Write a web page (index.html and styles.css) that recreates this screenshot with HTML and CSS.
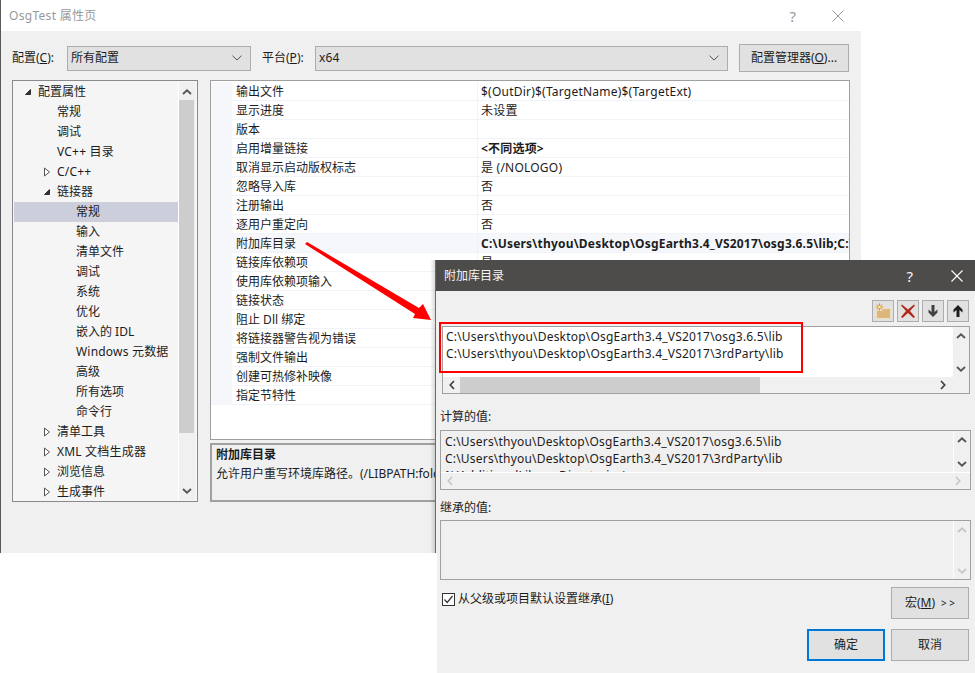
FILE: index.html
```html
<!DOCTYPE html>
<html lang="zh-CN">
<head>
<meta charset="utf-8">
<title>OsgTest 属性页</title>
<link rel="stylesheet" href="styles.css">
</head>
<body>
<svg class="defs" width="0" height="0" aria-hidden="true">
  <symbol id="open" viewBox="0 0 8 8"><path d="M6.5 1.5V6.5H1.5Z" fill="#333" stroke="#333"/></symbol>
  <symbol id="closed" viewBox="0 0 8 10"><path d="M1.5 1V9L6.5 5Z" fill="#fff" stroke="#555"/></symbol>
  <symbol id="up" viewBox="0 0 10 6"><path d="M1 5L5 1.3L9 5" fill="none" stroke="currentColor" stroke-width="1.8"/></symbol>
  <symbol id="down" viewBox="0 0 10 6"><path d="M1 1L5 4.7L9 1" fill="none" stroke="currentColor" stroke-width="1.8"/></symbol>
  <symbol id="left" viewBox="0 0 6 10"><path d="M5 1L1.3 5L5 9" fill="none" stroke="currentColor" stroke-width="1.8"/></symbol>
  <symbol id="right" viewBox="0 0 6 10"><path d="M1 1L4.7 5L1 9" fill="none" stroke="currentColor" stroke-width="1.8"/></symbol>
  <symbol id="caret" viewBox="0 0 10 6"><path d="M.5 .7L5 5L9.5 .7" fill="none" stroke="#555" stroke-width="1"/></symbol>
</svg>

<div class="window main-window">
  <header class="main-title">
    <span class="main-title-text">OsgTest 属性页</span>
    <span class="title-help">?</span>
    <svg class="title-close" width="12" height="12" viewBox="0 0 12 12"><path d="M.5 .5L11.5 11.5M11.5 .5L.5 11.5" stroke="#999" fill="none"/></svg>
  </header>
  <div class="main-body">
    <div class="config-row">
      <span class="config-label label-a">配置(<u>C</u>):</span>
      <div class="select select-a"><span>所有配置</span><svg class="caret" width="10" height="6"><use href="#caret"/></svg></div>
      <span class="config-label label-b">平台(<u>P</u>):</span>
      <div class="select select-b"><span class="lat">x64</span><svg class="caret" width="10" height="6"><use href="#caret"/></svg></div>
      <div class="button config-button">配置管理器(<u>O</u>)...</div>
    </div>
    <div class="panels">
      <div class="tree">
        <ul class="tree-list">
          <li class="node l1"><svg class="tw" width="8" height="8"><use href="#open"/></svg>配置属性</li>
          <li class="node l2">常规</li>
          <li class="node l2">调试</li>
          <li class="node l2 lat">VC++ 目录</li>
          <li class="node l2 lat"><svg class="tw tw-c" width="8" height="10"><use href="#closed"/></svg>C/C++</li>
          <li class="node l2"><svg class="tw" width="8" height="8"><use href="#open"/></svg>链接器</li>
          <li class="node l3 selected">常规</li>
          <li class="node l3">输入</li>
          <li class="node l3">清单文件</li>
          <li class="node l3">调试</li>
          <li class="node l3">系统</li>
          <li class="node l3">优化</li>
          <li class="node l3">嵌入的 IDL</li>
          <li class="node l3 lat">Windows 元数据</li>
          <li class="node l3">高级</li>
          <li class="node l3">所有选项</li>
          <li class="node l3">命令行</li>
          <li class="node l2"><svg class="tw tw-c" width="8" height="10"><use href="#closed"/></svg>清单工具</li>
          <li class="node l2 lat"><svg class="tw tw-c" width="8" height="10"><use href="#closed"/></svg>XML 文档生成器</li>
          <li class="node l2"><svg class="tw tw-c" width="8" height="10"><use href="#closed"/></svg>浏览信息</li>
          <li class="node l2"><svg class="tw tw-c" width="8" height="10"><use href="#closed"/></svg>生成事件</li>
        </ul>
        <div class="vbar tree-bar">
          <svg class="bar-btn" width="10" height="6"><use href="#up"/></svg>
          <div class="tree-thumb"></div>
          <svg class="bar-btn" width="10" height="6"><use href="#down"/></svg>
        </div>
      </div>
      <div class="right-panels">
        <div class="grid">
          <div class="row"><span class="name">输出文件</span><span class="value">$(OutDir)$(TargetName)$(TargetExt)</span></div>
          <div class="row"><span class="name">显示进度</span><span class="value">未设置</span></div>
          <div class="row"><span class="name">版本</span><span class="value"></span></div>
          <div class="row"><span class="name">启用增量链接</span><span class="value strong">&lt;不同选项&gt;</span></div>
          <div class="row"><span class="name">取消显示启动版权标志</span><span class="value">是 (/NOLOGO)</span></div>
          <div class="row"><span class="name">忽略导入库</span><span class="value">否</span></div>
          <div class="row"><span class="name">注册输出</span><span class="value">否</span></div>
          <div class="row"><span class="name">逐用户重定向</span><span class="value">否</span></div>
          <div class="row current"><span class="name">附加库目录</span><span class="value strong">C:\Users\thyou\Desktop\OsgEarth3.4_VS2017\osg3.6.5\lib;C:\Users</span></div>
          <div class="row"><span class="name">链接库依赖项</span><span class="value">是</span></div>
          <div class="row"><span class="name">使用库依赖项输入</span><span class="value">否</span></div>
          <div class="row"><span class="name">链接状态</span><span class="value"></span></div>
          <div class="row"><span class="name">阻止 Dll 绑定</span><span class="value"></span></div>
          <div class="row"><span class="name">将链接器警告视为错误</span><span class="value"></span></div>
          <div class="row"><span class="name">强制文件输出</span><span class="value"></span></div>
          <div class="row"><span class="name">创建可热修补映像</span><span class="value"></span></div>
          <div class="row"><span class="name">指定节特性</span><span class="value"></span></div>
        </div>
        <div class="desc">
          <div class="desc-title">附加库目录</div>
          <div class="desc-text">允许用户重写环境库路径。(/LIBPATH:folder)</div>
        </div>
      </div>
    </div>
  </div>
  <div class="dialog-shade"></div>
</div>

<svg class="annotation" width="140" height="90" viewBox="0 0 140 90">
  <path d="M5 3L7 1L119 67L123 63L131 79L113 77L115 73Z" fill="#ff0000"/>
</svg>

<div class="window dialog">
  <header class="dialog-title">
    <span class="dialog-title-text">附加库目录</span>
    <span class="dialog-help">?</span>
    <svg class="dialog-close" width="12" height="12" viewBox="0 0 12 12"><path d="M.5 .5L11.5 11.5M11.5 .5L.5 11.5" stroke="#fff" stroke-width="1.1" fill="none"/></svg>
  </header>
  <div class="dialog-body">
    <div class="toolbar">
      <div class="tool"><svg width="20" height="18" viewBox="0 0 20 18">
        <path d="M3.5 8.5H9L10 6.5H17.5V16.5H3.5Z" fill="#dcb67a" stroke="#efe0c2"/>
        <path d="M6.5 1.5V8.5M3 5H10M4 2.5L9 7.5M9 2.5L4 7.5" stroke="#e08a10" stroke-width="1"/>
        <circle cx="6.5" cy="5" r="1.2" fill="#fff2b0"/>
      </svg></div>
      <div class="tool"><svg width="16" height="16" viewBox="0 0 16 16"><path d="M2 1.5L8 6.5L14 1.5L15 2.5L10 8L15 14L13.5 15L8 10L2.5 15L1 14L6 8L1 2.5Z" fill="#b3271a"/></svg></div>
      <div class="tool"><svg width="12" height="14" viewBox="0 0 12 14"><path d="M4.5 1H7.5V8L10.5 5.5V8.5L6 13L1.5 8.5V5.5L4.5 8Z" fill="#424242"/></svg></div>
      <div class="tool"><svg width="12" height="14" viewBox="0 0 12 14"><path d="M4.5 13H7.5V6L10.5 8.5V5.5L6 1L1.5 5.5V8.5L4.5 6Z" fill="#1e1e1e"/></svg></div>
    </div>
    <div class="edit-box">
      <div class="edit-lines">
        <div class="path">C:\Users\thyou\Desktop\OsgEarth3.4_VS2017\osg3.6.5\lib</div>
        <div class="path">C:\Users\thyou\Desktop\OsgEarth3.4_VS2017\3rdParty\lib</div>
      </div>
      <div class="vbar small-bar">
        <svg class="bar-btn" width="10" height="6"><use href="#up"/></svg>
        <svg class="bar-btn" width="10" height="6"><use href="#down"/></svg>
      </div>
      <div class="hbar">
        <svg class="bar-btn" width="6" height="10"><use href="#left"/></svg>
        <div class="hthumb"></div>
        <svg class="bar-btn" width="6" height="10"><use href="#right"/></svg>
      </div>
      <div class="corner"></div>
      <div class="red-box"></div>
    </div>
    <div class="field-label first-label">计算的值:</div>
    <div class="ro-box computed">
      <div class="ro-lines">
        <div class="path">C:\Users\thyou\Desktop\OsgEarth3.4_VS2017\osg3.6.5\lib</div>
        <div class="path">C:\Users\thyou\Desktop\OsgEarth3.4_VS2017\3rdParty\lib</div>
        <div class="path">%(AdditionalLibraryDirectories)</div>
      </div>
      <div class="vbar small-bar ro-bar">
        <svg class="bar-btn" width="10" height="6"><use href="#up"/></svg>
        <svg class="bar-btn" width="10" height="6"><use href="#down"/></svg>
      </div>
      <div class="hbar ro-hbar">
        <svg class="bar-btn" width="6" height="10"><use href="#left"/></svg>
        <svg class="bar-btn" width="6" height="10"><use href="#right"/></svg>
      </div>
    </div>
    <div class="field-label second-label">继承的值:</div>
    <div class="ro-box inherited">
      <div class="ro-lines"></div>
      <div class="vbar small-bar ro-bar disabled">
        <svg class="bar-btn" width="10" height="6"><use href="#up"/></svg>
        <svg class="bar-btn" width="10" height="6"><use href="#down"/></svg>
      </div>
    </div>
    <div class="inherit-row">
      <label class="check-label">
        <svg class="check" width="13" height="13" viewBox="0 0 13 13"><rect x=".5" y=".5" width="12" height="12" fill="#fff" stroke="#333"/><path d="M2.5 6.5L5.2 9.5L10.5 3" fill="none" stroke="#333" stroke-width="1.2"/></svg>
        <span>从父级或项目默认设置继承(<u>I</u>)</span>
      </label>
      <div class="button dlg-button">宏(<u>M</u>) <span class="chev">&gt; &gt;</span></div>
    </div>
    <div class="action-row">
      <div class="button dlg-button default">确定</div>
      <div class="button dlg-button">取消</div>
    </div>
  </div>
</div>
</body>
</html>
```

FILE: styles.css
```css
* { box-sizing: border-box; }
html, body { margin: 0; padding: 0; }
body {
  width: 975px; height: 673px; overflow: hidden; position: relative; background: #fff;
  font-family: "Noto Sans", "Noto Sans CJK SC", sans-serif;
  font-size: 12px; line-height: 16px; color: #1c1c1c;
}
ul { list-style: none; margin: 0; padding: 0; }
u { text-underline-offset: 1px; }
.defs { position: absolute; }
.window { position: absolute; }
.lat { letter-spacing: .2px; }

/* main window */
.main-window { left: 0; top: 0; width: 861px; height: 553px; border-left: 1px solid #5a5a5a; display: flex; flex-direction: column; background: #f0f0f0; }
.main-title { height: 31px; background: #fff; display: flex; align-items: center; padding-left: 8px; color: #999; flex: none; }
.main-title-text { flex: 1; letter-spacing: .3px; }
.title-help { margin-right: 36px; font-size: 15px; }
.title-close { margin-right: 17px; }
.main-body { flex: 1; padding: 13px 11px 0 11px; }
.config-row { display: flex; align-items: center; height: 28px; }
.config-label { flex: none; }
.label-a { width: 55px; }
.label-b { width: 53px; margin-left: 11px; }
.select { height: 25px; background: #e1e1e1; border: 1px solid #adadad; display: flex; align-items: center; justify-content: space-between; padding: 0 3px 0 3px; }
.select-a { width: 184px; }
.select-b { width: 413px; }
.caret { margin-right: 5px; }
.button { background: #e1e1e1; border: 1px solid #adadad; display: flex; align-items: center; justify-content: center; }
.config-button { width: 110px; height: 28px; margin-left: 11px; }
.panels { display: flex; margin-top: 8px; gap: 12px; height: 422px; }

/* tree */
.tree { width: 186px; border: 1px solid #8a8a8e; background: #f5f5f5; display: flex; height: 100%; padding: 1px; }
.tree-list { flex: 1; }
.node { height: 20px; display: flex; align-items: center; position: relative; white-space: nowrap; }
.l1 { padding-left: 24px; }
.l2 { padding-left: 43px; }
.l3 { padding-left: 62px; }
.selected { background: #cccedb; }
.tw { position: absolute; left: 10px; top: 6px; }
.l2 .tw { left: 29px; }
.l2 .tw-c { top: 5px; }
.vbar { display: flex; flex-direction: column; align-items: center; justify-content: space-between; color: #555; background: #f0f0f0; }
.tree-bar { width: 17px; padding: 7px 0 6px; height: 100%; border-left: 1px solid #fff; margin-right: 1px; }
.tree-thumb { width: 15px; flex: 1; background: #cdcdcd; margin: 5px 0 55px; align-self: flex-start; }
.bar-btn { flex: none; }

/* grid */
.right-panels { width: 640px; display: flex; flex-direction: column; }
.grid { height: 360px; background: #fff; border: 1px solid #a0a0a0; padding-top: 1px; overflow: hidden; }
.row { height: 19px; display: flex; align-items: flex-start; background: #fff; box-shadow: inset 21px 0 0 #f5f7fb, inset 0 -1px 0 #f0f3f8; white-space: nowrap; overflow: hidden; }
.row.current { background: #f5f7fb; }
.name { width: 267px; padding-left: 25px; flex: none; height: 19px; line-height: 19px; border-right: 1px solid #f0f3f8; }
.value { padding-left: 3px; line-height: 19px; letter-spacing: .22px; }
.strong { font-weight: 700; letter-spacing: .2px; }
.desc { margin-top: 3px; height: 59px; border: 1px solid #a0a0a0; border-width: 2px 1px 2px 2px; background: #f0f0f0; padding: 1px 4px; }
.desc-title { font-weight: 700; line-height: 18px; }
.desc-text { line-height: 20px; white-space: nowrap; }

/* arrow */
.annotation { position: absolute; left: 300px; top: 241px; }

/* dialog */
.dialog-shade { position: absolute; top: 260px; bottom: 0; width: 7px; left: 429px; background: linear-gradient(to right, rgba(0,0,0,0), rgba(0,0,0,.2)); }
.dialog { left: 435px; top: 260px; width: 540px; height: 413px; border-left: 1px solid #6a6a6a; display: flex; flex-direction: column; background: #f0f0f0; }
.dialog::before { content: ""; position: absolute; left: -1px; top: 293px; bottom: 0; width: 2px; background: #fff; }
.dialog-title { height: 31px; background: #4d4c4a; color: #f4f4f4; display: flex; align-items: center; padding-left: 8px; flex: none; }
.dialog-title-text { flex: 1; }
.dialog-help { margin-right: 38px; font-size: 15px; }
.dialog-close { margin-right: 12px; }
.dialog-body { flex: 1; padding: 9px 5px 0 4px; }
.toolbar { display: flex; justify-content: flex-end; gap: 3px; height: 22px; padding-right: 1px; }
.tool { width: 22px; height: 22px; background: #e1e1e1; border: 1px solid #adadad; display: flex; align-items: center; justify-content: center; }
.edit-box { position: relative; margin: 4px 0 0 2px; height: 68px; width: 528px; border: 1px solid #a0a0a0; background: #f0f0f0; display: grid; grid-template-columns: 1fr 16px; grid-template-rows: 50px 16px; }
.edit-lines { background: #fff; padding: 1px 0 0 3px; }
.path { height: 17px; line-height: 17px; white-space: nowrap; letter-spacing: .2px; }
.small-bar { padding: 6px 0 5px; }
.hbar { display: flex; align-items: center; justify-content: space-between; padding: 0 7px 0 6px; color: #444; }
.hthumb { width: 300px; height: 16px; background: #cdcdcd; margin-left: 5px; margin-right: auto; }
.corner { background: #f0f0f0; }
.red-box { position: absolute; left: -4px; top: -5px; width: 364px; height: 51px; border: 2px solid #f00; }
.field-label { line-height: 16px; }
.first-label { margin-top: 15px; }
.ro-box { width: 531px; border: 1px solid #a0a0a0; background: #f0f0f0; display: grid; grid-template-columns: 1fr 17px; }
.computed { height: 60px; margin-top: 5px; grid-template-rows: 41px 17px; }
.inherited { height: 60px; margin-top: 4px; grid-template-rows: 1fr; }
.ro-lines { padding: 2px 0 0 4px; overflow: hidden; }
.ro-bar { border-left: 1px solid #fff; color: #555; background: #f0f0f0; }
.computed .ro-hbar { grid-column: 1 / 3; border-top: 1px solid #fff; color: #c8c8c8; padding: 0 9px 0 6px; }
.disabled { color: #c8c8c8; }
.second-label { margin-top: 10px; }
.inherit-row { display: flex; justify-content: space-between; align-items: flex-start; margin-top: 7px; padding-right: 1px; }
.check-label { display: flex; align-items: center; gap: 3px; margin: 4px 0 0 2px; }
.dlg-button { width: 78px; height: 32px; }
.chev { font-size: 10px; margin-left: 6px; letter-spacing: 0; white-space: pre; }
.action-row { display: flex; justify-content: flex-end; gap: 6px; margin-top: 10px; padding-right: 1px; }
.default { border: 2px solid #0078d7; }
```
